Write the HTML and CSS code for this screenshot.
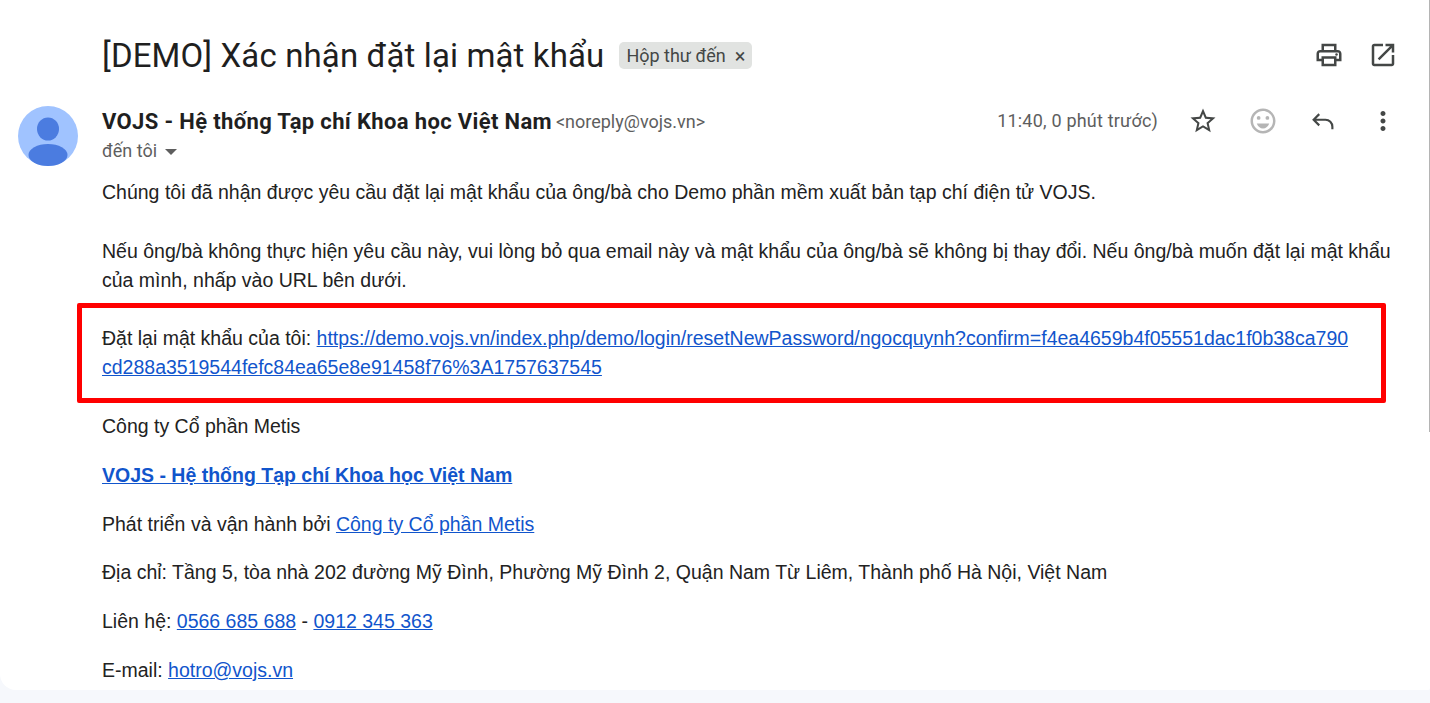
FILE: index.html
```html
<!DOCTYPE html>
<html lang="vi">
<head>
	<meta charset="utf-8">
	<title>[DEMO] Xác nhận đặt lại mật khẩu</title>
	<link rel="stylesheet" href="styles.css">
</head>
<body>
	<div class="mail">
		<div class="subject">
			<h1 class="title">[DEMO] Xác nhận đặt lại mật khẩu</h1>
			<span class="chip">Hộp thư đến <span class="chip-x">×</span></span>
			<div class="subject-icons">
				<span class="icon-btn">
					<svg viewBox="0 0 24 24"><path d="M19 8h-1V3H6v5H5c-1.66 0-3 1.34-3 3v6h4v4h12v-4h4v-6c0-1.66-1.34-3-3-3zM8 5h8v3H8V5zm8 12v2H8v-4h8v2zm2-2v-2H6v2H4v-4c0-.55.45-1 1-1h14c.55 0 1 .45 1 1v4h-2z"/><circle cx="18" cy="11.5" r="1"/></svg>
				</span>
				<span class="icon-btn">
					<svg viewBox="0 0 24 24"><path d="M19 19H5V5h7V3H5c-1.11 0-2 .9-2 2v14c0 1.1.89 2 2 2h14c1.1 0 2-.9 2-2v-7h-2v7zM14 3v2h3.59l-9.83 9.83 1.41 1.41L19 6.41V10h2V3h-7z"/></svg>
				</span>
			</div>
		</div>

		<div class="message">
			<svg class="avatar" viewBox="0 0 60 60">
				<circle cx="30" cy="30" r="30" fill="#a0c3ff"/>
				<ellipse cx="30" cy="23" rx="11" ry="11.5" fill="#4b7ce0"/>
				<ellipse cx="30" cy="49" rx="19.5" ry="11" fill="#4b7ce0"/>
			</svg>
			<div class="content">
				<div class="sender-row">
					<div class="sender">
						<div class="from">
							<span class="name">VOJS - Hệ thống Tạp chí Khoa học Việt Nam</span>
							<span class="addr">&lt;noreply@vojs.vn&gt;</span>
						</div>
						<div class="to">đến tôi <span class="caret"></span></div>
					</div>
					<span class="time">11:40, 0 phút trước)</span>
					<div class="msg-icons">
						<span class="icon-btn">
							<svg viewBox="0 0 24 24"><path d="M22 9.24l-7.19-.62L12 2 9.19 8.63 2 9.24l5.46 4.73L5.82 21 12 17.27 18.18 21l-1.63-7.03L22 9.24zM12 15.4l-3.76 2.27 1-4.28-3.32-2.88 4.38-.38L12 6.1l1.71 4.04 4.38.38-3.32 2.88 1 4.28L12 15.4z"/></svg>
						</span>
						<span class="icon-btn muted">
							<svg viewBox="0 0 24 24"><path d="M11.99 2C6.47 2 2 6.48 2 12s4.47 10 9.99 10C17.52 22 22 17.52 22 12S17.52 2 11.99 2zM12 20c-4.42 0-8-3.58-8-8s3.58-8 8-8 8 3.58 8 8-3.58 8-8 8z"/><circle cx="15.5" cy="9.5" r="1.5"/><circle cx="8.5" cy="9.5" r="1.5"/><path d="M12 18c2.28 0 4.22-1.66 5-4H7c.78 2.34 2.72 4 5 4z"/></svg>
						</span>
						<span class="icon-btn">
							<svg viewBox="0 0 24 24"><path class="line" d="M9 6.500 4.500 11 9 15.500M4.500 11H14a5.500 5.500 0 0 1 5.500 5.500v2"/></svg>
						</span>
						<span class="icon-btn">
							<svg viewBox="0 0 24 24"><path d="M12 8c1.100 0 2-.9 2-2s-.9-2-2-2-2 .9-2 2 .9 2 2 2zm0 2c-1.100 0-2 .9-2 2s.9 2 2 2 2-.9 2-2-.9-2-2-2zm0 6c-1.100 0-2 .9-2 2s.9 2 2 2 2-.9 2-2-.9-2-2-2z"/></svg>
						</span>
					</div>
				</div>

				<div class="body-text">
					<p class="intro">Chúng tôi đã nhận được yêu cầu đặt lại mật khẩu của ông/bà cho Demo phần mềm xuất bản tạp chí điện tử VOJS.<br><br>Nếu ông/bà không thực hiện yêu cầu này, vui lòng bỏ qua email này và mật khẩu của ông/bà sẽ không bị thay đổi. Nếu ông/bà muốn đặt lại mật khẩu của mình, nhấp vào URL bên dưới.</p>
					<p class="reset">Đặt lại mật khẩu của tôi: <a href="#">https://demo.vojs.vn/index.php/demo/login/resetNewPassword/ngocquynh?confirm=f4ea4659b4f05551dac1f0b38ca790<br>cd288a3519544fefc84ea65e8e91458f76%3A1757637545</a><span class="red-box"></span></p>
					<p>Công ty Cổ phần Metis</p>
					<p><a href="#"><b>VOJS - Hệ thống Tạp chí Khoa học Việt Nam</b></a></p>
					<p>Phát triển và vận hành bởi <a href="#">Công ty Cổ phần Metis</a></p>
					<p>Địa chỉ: Tầng 5, tòa nhà 202 đường Mỹ Đình, Phường Mỹ Đình 2, Quận Nam Từ Liêm, Thành phố Hà Nội, Việt Nam</p>
					<p>Liên hệ: <a href="#">0566 685 688</a> - <a href="#">0912 345 363</a></p>
					<p>E-mail: <a href="#">hotro@vojs.vn</a></p>
				</div>
			</div>
		</div>
		<div class="scroll-line"></div>
	</div>
</body>
</html>
```

FILE: styles.css
```css
*{
	margin: 0px;
	padding: 0px;
	box-sizing: border-box;
}
html,body{
	height: 100%;
	overflow: hidden;
}
body{
	background: #f6f8fc;
	font-family: "Liberation Sans", "Noto Sans", sans-serif;
	color: #222;
}
.mail{
	position: relative;
	height: 690px;
	background: #fff;
	border-bottom-left-radius: 16px;
	border-bottom-right-radius: 2px;
	overflow: hidden;
}
.scroll-line{
	position: absolute;
	top: 0;
	right: 0;
	width: 1px;
	height: 432px;
	background: #b4b4b4;
}
.subject{
	display: flex;
	align-items: center;
	height: 110px;
	padding: 0 32px 0 102px;
}
.title{
	font-family: Roboto, sans-serif;
	font-size: 33px;
	font-weight: 400;
	letter-spacing: .13px;
	color: #1f1f1f;
	white-space: nowrap;
}
.chip{
	margin-left: 15px;
	height: 27px;
	width: 133px;
	padding-left: 7px;
	display: flex;
	align-items: center;
	gap: 9px;
	background: #e1e3e1;
	border-radius: 5px;
	font-family: Roboto, sans-serif;
	font-size: 18px;
	color: #444746;
	white-space: nowrap;
}
.chip-x{
	font-size: 20px;
	line-height: 1;
	margin-top: 2px;
}
.subject-icons,.msg-icons{
	display: flex;
	gap: 30px;
}
.subject-icons{
	margin-left: auto;
	gap: 24px;
}
.icon-btn{
	display: block;
	width: 30px;
	height: 30px;
}
.icon-btn svg{
	display: block;
	width: 30px;
	height: 30px;
	fill: #444746;
}
.icon-btn .line{
	fill: none;
	stroke: #444746;
	stroke-width: 1.7;
}
.icon-btn.muted svg{
	fill: #b5b5b5;
}
.message{
	display: flex;
	padding: 0 32px 0 18px;
}
.avatar{
	width: 60px;
	height: 60px;
	margin-top: -4px;
	flex: none;
}
.content{
	flex: 1;
	min-width: 0;
	margin-left: 24px;
}
.sender-row{
	display: flex;
	height: 68px;
}
.sender{
	flex: 1;
}
.from{
	height: 22px;
	display: flex;
	align-items: center;
	gap: 4px;
	white-space: nowrap;
}
.name{
	font-family: Roboto, sans-serif;
	font-size: 22px;
	font-weight: 700;
	letter-spacing: .35px;
	color: #1f1f1f;
}
.addr{
	font-family: Roboto, sans-serif;
	font-size: 18px;
	color: #5e5e5e;
}
.to{
	margin-top: 8px;
	font-family: Roboto, sans-serif;
	font-size: 18px;
	color: #5e5e5e;
	display: flex;
	align-items: center;
	gap: 8px;
}
.caret{
	width: 0;
	height: 0;
	margin-top: 3px;
	border-left: 6px solid transparent;
	border-right: 6px solid transparent;
	border-top: 6px solid #5e5e5e;
}
.time{
	font-family: Roboto, sans-serif;
	font-size: 18px;
	letter-spacing: .2px;
	color: #5e5e5e;
	line-height: 22px;
	margin-right: 30px;
	white-space: nowrap;
}
.msg-icons{
	margin-top: -4px;
}
.body-text{
	font-size: 19.5px;
	line-height: 29.25px;
}
.body-text p{
	margin-bottom: 19.5px;
}
.body-text .intro{
	margin-bottom: 29px;
}
.body-text .reset{
	position: relative;
	margin-bottom: 29.6px;
}
.red-box{
	position: absolute;
	left: -25px;
	right: 12px;
	top: -21px;
	bottom: -20px;
	border: 5px solid #f00;
	border-radius: 2px;
}
.body-text a{
	color: #1155cc;
}
```
